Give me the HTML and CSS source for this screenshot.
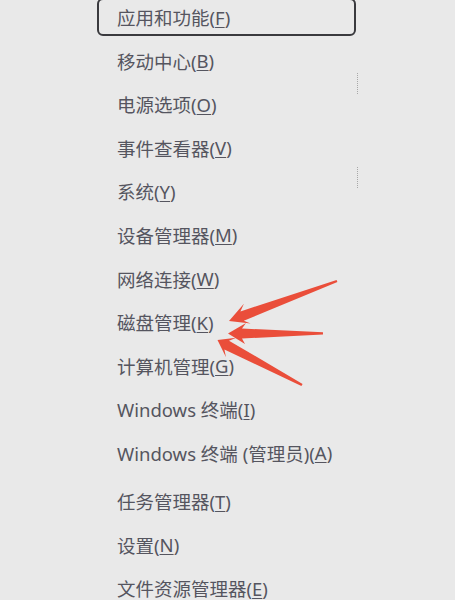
FILE: index.html
```html
<!DOCTYPE html>
<html lang="zh-CN">
<head>
<meta charset="utf-8">
<title>Win+X 菜单</title>
<link rel="stylesheet" href="styles.css">
</head>
<body>
<div class="page">
  <ul class="menu">
    <li class="item focused">应用和功能(<u>F</u>)</li>
    <li class="item">移动中心(<u>B</u>)</li>
    <li class="item">电源选项(<u>O</u>)</li>
    <li class="item">事件查看器(<u>V</u>)</li>
    <li class="item">系统(<u>Y</u>)</li>
    <li class="item">设备管理器(<u>M</u>)</li>
    <li class="item">网络连接(<u>W</u>)</li>
    <li class="item">磁盘管理(<u>K</u>)</li>
    <li class="item">计算机管理(<u>G</u>)</li>
    <li class="item">Windows 终端(<u>I</u>)</li>
    <li class="item">Windows 终端 (管理员)(<u>A</u>)</li>
    <li class="item group">任务管理器(<u>T</u>)</li>
    <li class="item">设置(<u>N</u>)</li>
    <li class="item">文件资源管理器(<u>E</u>)</li>
  </ul>
  <span class="dots dots-a"></span>
  <span class="dots dots-b"></span>
  <svg class="arrows" width="455" height="600" viewBox="0 0 455 600" aria-hidden="true">
    <polygon points="229,321 243.9,303.7 240.4,311.4 336.6,279.9 337.4,282.1 243.8,320.8 250.6,323.6"/>
    <polygon points="228,333.5 246,323 242,328.5 323,332.3 323,334.5 242,338.5 245,344"/>
    <polygon points="217.5,340 226,357.2 224.4,349.5 301.4,386.1 302.6,383.9 229,340.7 236.2,337.8"/>
  </svg>
</div>
</body>
</html>
```
FILE: styles.css
```css
html, body {
  margin: 0;
  padding: 0;
  background: #e9e9e9;
}
.page {
  position: relative;
  width: 455px;
  height: 600px;
  overflow: hidden;
  background: #e9e9e9;
}
.menu {
  list-style: none;
  margin: -2px 0 0 97px;
  padding: 0;
  width: 259px;
  display: flex;
  flex-direction: column;
  gap: 5.6px;
}
.item {
  box-sizing: border-box;
  height: 38px;
  display: flex;
  align-items: center;
  padding-left: 18px;
  border: 2px solid transparent;
  border-radius: 6px;
  font-family: "Noto Sans", "Noto Sans CJK SC", sans-serif;
  font-size: 18.5px;
  color: #55555f;
  white-space: pre;
}
.item u {
  text-decoration-thickness: 1px;
  text-underline-offset: 2px;
}
.item.focused {
  border-color: #3a3a3e;
}
.item.group {
  margin-top: 4.5px;
}
.dots {
  position: absolute;
  left: 357px;
  width: 0;
  border-left: 1px dotted #a8a8a8;
}
.dots-a {
  top: 73px;
  height: 21px;
}
.dots-b {
  top: 167px;
  height: 21px;
}
.arrows {
  position: absolute;
  left: 0;
  top: 0;
  fill: #ea4e3a;
}
```
